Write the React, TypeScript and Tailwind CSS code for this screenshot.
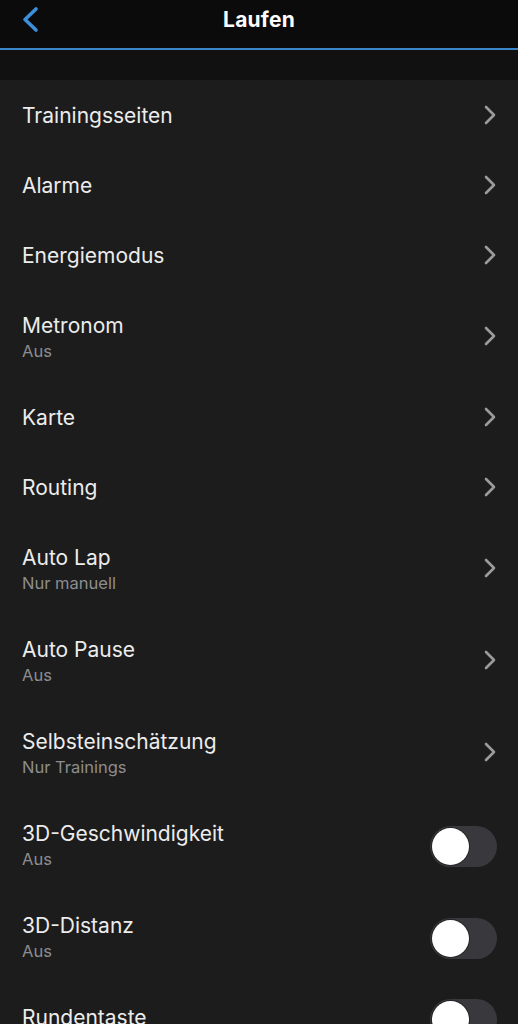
import React from "react";

type Row = {
    title: string;
    sub?: string;
    toggle?: boolean;
};

const rows: Row[] = [
    { title: "Trainingsseiten" },
    { title: "Alarme" },
    { title: "Energiemodus" },
    { title: "Metronom", sub: "Aus" },
    { title: "Karte" },
    { title: "Routing" },
    { title: "Auto Lap", sub: "Nur manuell" },
    { title: "Auto Pause", sub: "Aus" },
    { title: "Selbsteinschätzung", sub: "Nur Trainings" },
    { title: "3D-Geschwindigkeit", sub: "Aus", toggle: true },
    { title: "3D-Distanz", sub: "Aus", toggle: true },
    { title: "Rundentaste", toggle: true },
];

function Chevron() {
    return (
        <svg width="14" height="22" viewBox="0 0 14 22" fill="none">
            <path
                d="M3 3l8 8-8 8"
                stroke="#9b9b9b"
                strokeWidth="2.6"
                strokeLinecap="round"
                strokeLinejoin="round"
            />
        </svg>
    );
}

function Toggle() {
    return (
        <div className="mt-[5px] w-[67px] h-[41px] rounded-full bg-[#39393d] p-[2px] flex items-center">
            <div className="w-[37px] h-[37px] rounded-full bg-white shadow-[0_0_0_1px_rgba(0,0,0,0.35)]" />
        </div>
    );
}

export default function App() {
    return (
        <div
            className="w-[518px] h-[1024px] overflow-hidden bg-[#1c1c1c] text-white"
            style={{ fontFamily: "Inter, 'Noto Sans', sans-serif" }}
        >
            <div className="h-[48px] bg-[#0b0b0b] relative flex items-center justify-center">
                <svg
                    className="absolute left-[20px] top-[6px]"
                    width="22"
                    height="28"
                    viewBox="0 0 22 28"
                    fill="none"
                >
                    <path
                        d="M16 3L5 13.5 16 24"
                        stroke="#3b8fdb"
                        strokeWidth="3.6"
                        strokeLinecap="round"
                        strokeLinejoin="round"
                    />
                </svg>
                <span className="text-[21px] font-bold -mt-[9px] tracking-[0.2px]">Laufen</span>
            </div>
            <div className="h-[2px] bg-[#3a86c8]" />
            <div className="h-[30px] bg-[#111111]" />

            <div>
                {rows.map((row) => (
                    <div
                        key={row.title}
                        className={`flex items-center justify-between pl-[22px] pr-[21px] ${
                            row.sub ? "h-[92px]" : "h-[70px]"
                        }`}
                    >
                        <div className="flex flex-col pt-[2px]">
                            <span className="text-[21px] leading-[26px] text-[#ececec]">
                                {row.title}
                            </span>
                            {row.sub && (
                                <span className="text-[16.5px] leading-[22px] mt-[1px] text-[#8d8d8f]">
                                    {row.sub}
                                </span>
                            )}
                        </div>
                        {row.toggle ? <Toggle /> : <Chevron />}
                    </div>
                ))}
            </div>
        </div>
    );
}
